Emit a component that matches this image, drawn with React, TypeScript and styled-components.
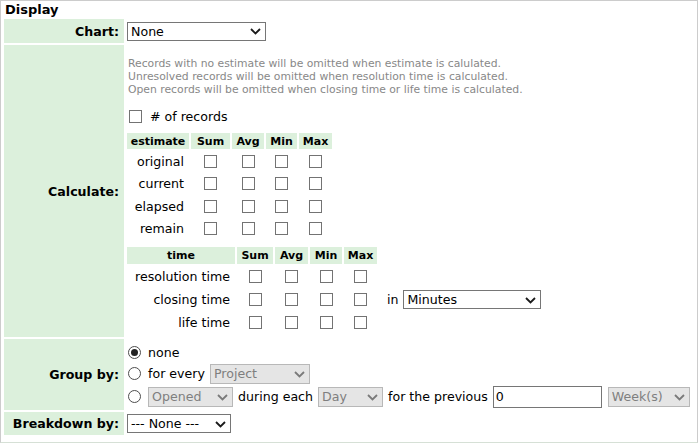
import React from "react";
import styled, { createGlobalStyle } from "styled-components";

const GlobalStyle = createGlobalStyle`
  html, body {
    margin: 0;
    padding: 0;
    background: #ffffff;
  }
  body {
    font-family: "DejaVu Sans", Verdana, sans-serif;
    font-size: 12.6px;
    color: #000;
  }
`;

const Panel = styled.div`
  width: 698px;
  box-sizing: border-box;
  border: 1px solid #cccccc;
  border-bottom-color: #d6e0d6;
  padding: 0 2px 7px 3px;
`;

const Title = styled.div`
  font-weight: bold;
  font-size: 13px;
  height: 18px;
  line-height: 18px;
  padding-left: 1px;
`;

const Form = styled.div`
  display: grid;
  grid-template-columns: 120px 1fr;
  column-gap: 2px;
  row-gap: 2px;
`;

const Label = styled.div`
  background: #dcf0dc;
  font-weight: bold;
  display: flex;
  align-items: center;
  justify-content: flex-end;
  padding-right: 5px;
`;

const Cell = styled.div<{ $h?: number; $pad?: string }>`
  display: flex;
  flex-direction: column;
  justify-content: center;
  align-items: flex-start;
  min-height: ${(p) => (p.$h ? `${p.$h}px` : "auto")};
  padding: ${(p) => p.$pad || "0 0 0 1px"};
`;

const Notes = styled.div`
  margin-top: 12px;
  padding-left: 2px;
  font-size: 10.8px;
  line-height: 13px;
  color: #888888;
`;

const Line = styled.div<{ $h: number }>`
  display: flex;
  align-items: center;
  height: ${(p) => p.$h}px;
  gap: 5px;
  white-space: nowrap;
`;

const Check = styled.input.attrs({ type: "checkbox" })`
  appearance: none;
  width: 13px;
  height: 13px;
  margin: 0;
  box-sizing: border-box;
  border: 1px solid #737373;
  background: #fff;
  vertical-align: middle;
`;

const Radio = styled.input.attrs({ type: "radio" })`
  appearance: none;
  width: 13px;
  height: 13px;
  margin: 0 2px 0 0;
  box-sizing: border-box;
  border: 1px solid #4d4d4d;
  border-radius: 50%;
  background: #fff;
  display: grid;
  place-content: center;
  &:checked::after {
    content: "";
    width: 7px;
    height: 7px;
    border-radius: 50%;
    background: #222;
  }
`;

const CheckLine = styled(Line)`
  margin-top: 10px;
  padding-left: 3px;
  gap: 8px;
`;

const RadioLine = styled(Line)`
  padding-left: 2px;
`;

const Grid = styled.table<{ $top: number }>`
  border-collapse: separate;
  border-spacing: 2px;
  margin-top: ${(p) => p.$top}px;
  margin-left: -1px;
`;

const Head = styled.th<{ $w: number; $h: number }>`
  background: #dcf0dc;
  font-size: 11px;
  font-weight: bold;
  height: ${(p) => p.$h}px;
  padding: 0;
  width: ${(p) => p.$w}px;
  min-width: ${(p) => p.$w}px;
  text-align: center;
`;

const RowName = styled.td<{ $h: number }>`
  text-align: right;
  padding: 0 5px 0 0;
  height: ${(p) => p.$h}px;
  white-space: nowrap;
`;

const Box = styled.td`
  text-align: center;
  padding: 0;
  line-height: 0;
`;

const Extra = styled.td`
  padding: 0 0 0 8px;
  white-space: nowrap;
`;

const InWrap = styled.span`
  display: inline-flex;
  align-items: center;
  gap: 5px;
`;

const SelectWrap = styled.span<{ $w: number; $h: number }>`
  position: relative;
  display: inline-flex;
  width: ${(p) => p.$w}px;
  height: ${(p) => p.$h}px;
  flex: none;
`;

const SelectEl = styled.select<{ $off?: boolean }>`
  appearance: none;
  width: 100%;
  height: 100%;
  margin: 0;
  box-sizing: border-box;
  font-family: "DejaVu Sans", Verdana, sans-serif;
  font-size: 12.6px;
  padding: 0 16px 0 3px;
  border: 1px solid ${(p) => (p.$off ? "#b8b8b8" : "#767676")};
  border-radius: 0;
  background: ${(p) => (p.$off ? "#e5e5e5" : "#ffffff")};
  color: ${(p) => (p.$off ? "#7f7f7f" : "#000")};
  opacity: 1;
`;

const Chevron = styled.svg`
  position: absolute;
  right: 5px;
  top: 50%;
  margin-top: -3px;
  pointer-events: none;
`;

const TextInput = styled.input`
  width: 109px;
  height: 22px;
  box-sizing: border-box;
  margin: 0 1px 0 0;
  border: 1px solid #767676;
  padding: 0 2px;
  font-family: "DejaVu Sans", Verdana, sans-serif;
  font-size: 12.6px;
`;

type SelectProps = { w: number; h?: number; value: string; off?: boolean };

const Select = ({ w, h = 19, value, off }: SelectProps) => (
  <SelectWrap $w={w} $h={h}>
    <SelectEl $off={off} disabled={off} defaultValue={value}>
      <option>{value}</option>
    </SelectEl>
    <Chevron width="11" height="7" viewBox="0 0 11 7">
      <path
        d="M1 1 L5.5 5.5 L10 1"
        fill="none"
        stroke={off ? "#7a7a7a" : "#1a1a1a"}
        strokeWidth="1.8"
      />
    </Chevron>
  </SelectWrap>
);

const stats = ["Sum", "Avg", "Min", "Max"];

const estimateRows = ["original", "current", "elapsed", "remain"];
const timeRows = ["resolution time", "closing time", "life time"];

export default function App() {
  return (
    <>
      <GlobalStyle />
      <Panel>
        <Title>Display</Title>
        <Form>
          <Label>Chart:</Label>
          <Cell $h={24}>
            <Select w={139} value="None" />
          </Cell>

          <Label>Calculate:</Label>
          <Cell $pad="0 0 2px 0">
            <Notes>
              Records with no estimate will be omitted when estimate is calulated.
              <br />
              Unresolved records will be omitted when resolution time is calculated.
              <br />
              Open records will be omitted when closing time or life time is calculated.
            </Notes>
            <CheckLine $h={20}>
              <Check />
              <span># of records</span>
            </CheckLine>
            <Grid $top={5}>
              <thead>
                <tr>
                  <Head $h={16} $w={62}>estimate</Head>
                  <Head $h={16} $w={39}>Sum</Head>
                  <Head $h={16} $w={32}>Avg</Head>
                  <Head $h={16} $w={31}>Min</Head>
                  <Head $h={16} $w={33}>Max</Head>
                </tr>
              </thead>
              <tbody>
                {estimateRows.map((r) => (
                  <tr key={r}>
                    <RowName $h={20.5}>{r}</RowName>
                    {stats.map((s) => (
                      <Box key={s}>
                        <Check />
                      </Box>
                    ))}
                  </tr>
                ))}
              </tbody>
            </Grid>
            <Grid $top={4}>
              <thead>
                <tr>
                  <Head $h={17} $w={108}>time</Head>
                  <Head $h={17} $w={36}>Sum</Head>
                  <Head $h={17} $w={33}>Avg</Head>
                  <Head $h={17} $w={32}>Min</Head>
                  <Head $h={17} $w={33}>Max</Head>
                </tr>
              </thead>
              <tbody>
                {timeRows.map((r) => (
                  <tr key={r}>
                    <RowName $h={21}>{r}</RowName>
                    {stats.map((s) => (
                      <Box key={s}>
                        <Check />
                      </Box>
                    ))}
                    {r === "closing time" ? (
                      <Extra>
                        <InWrap>
                          in <Select w={138} value="Minutes" />
                        </InWrap>
                      </Extra>
                    ) : (
                      <Extra />
                    )}
                  </tr>
                ))}
              </tbody>
            </Grid>
          </Cell>

          <Label>Group by:</Label>
          <Cell $pad="3px 0 2px 0">
            <RadioLine $h={20}>
              <Radio name="group" defaultChecked />
              <span>none</span>
            </RadioLine>
            <RadioLine $h={23}>
              <Radio name="group" />
              <span>for every</span>
              <Select w={100} h={20} value="Project" off />
            </RadioLine>
            <RadioLine $h={23}>
              <Radio name="group" />
              <Select w={85} h={20} value="Opened" off />
              <span>during each</span>
              <Select w={65} h={20} value="Day" off />
              <span>for the previous</span>
              <TextInput defaultValue="0" />
              <Select w={82} h={20} value="Week(s)" off />
            </RadioLine>
          </Cell>

          <Label>Breakdown by:</Label>
          <Cell $h={23}>
            <Select w={104} value="--- None ---" />
          </Cell>
        </Form>
      </Panel>
    </>
  );
}
